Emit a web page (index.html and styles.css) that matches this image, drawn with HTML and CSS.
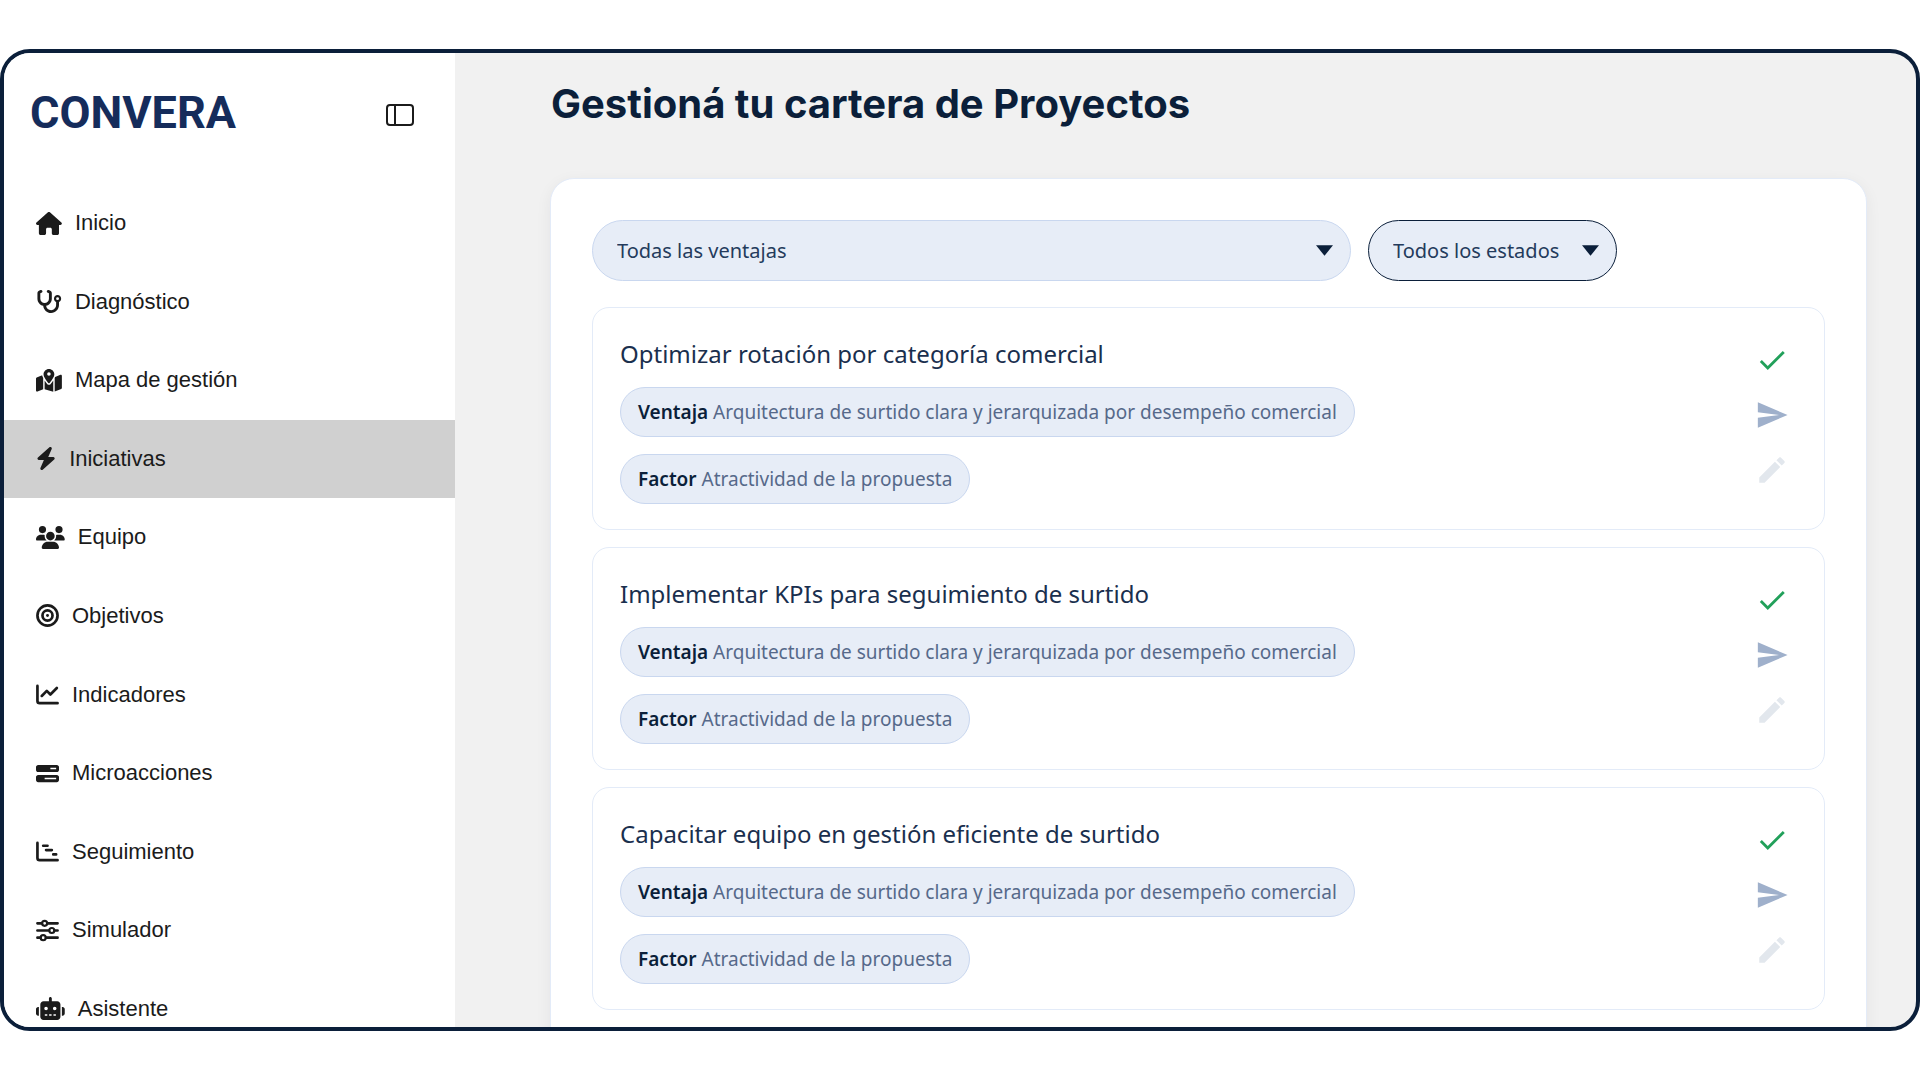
FILE: index.html
```html
<!DOCTYPE html>
<html lang="es">
  <head>
    <meta charset="UTF-8">
    <meta name="viewport" content="width=device-width, initial-scale=1.0">
    <title>Convera - Iniciativas</title>
    <link rel="stylesheet" href="styles.css">
  </head>

  <body>
    <div class="frame">
      <!-- Sidebar -->
      <aside class="sidebar">
        <div class="sidebar-header">
          <span class="logo">CONVERA</span>
          <button class="toggle" type="button" aria-label="Contraer menú">
            <svg viewBox="0 0 28 22"><rect x="1" y="1" width="26" height="20" rx="3"/><path d="M9 1v20"/></svg>
          </button>
        </div>

        <nav class="menu">
          <a href="#inicio">
            <svg viewBox="0 0 576 512"><path d="M575.8 255.500c0 18-15 32.100-32 32.100h-32l.7 160.200c0 2.700-.2 5.400-.5 8.100V472c0 22.100-17.900 40-40 40H392c-22.100 0-40-17.900-40-40V384c0-17.700-14.300-32-32-32H256c-17.700 0-32 14.300-32 32v88c0 22.100-17.900 40-40 40H104c-22.100 0-40-17.900-40-40V287.600H32c-18 0-32-14-32-32.100c0-9 3-17 10-24L266.400 8c7-7 15-8 22-8s15 2 21 7L564.800 231.500c8 7 12 15 11 24z"/></svg>
            Inicio
          </a>
          <a href="#diagnostico">
            <svg viewBox="0 0 576 512"><path d="M142.400 21.900c5.600 16.800-3.500 34.900-20.200 40.500L96 71.100V192c0 53 43 96 96 96s96-43 96-96V71.100l-26.100-8.700c-16.800-5.600-25.800-23.700-20.200-40.500s23.700-25.800 40.500-20.200l26.100 8.700C334.400 19.100 352 43.500 352 71.100V192c0 77.200-54.600 141.600-127.300 156.700C231 404.600 278.400 448 336 448c61.900 0 112-50.100 112-112V265.300c-28.300-12.300-48-40.500-48-73.300c0-44.200 35.800-80 80-80s80 35.800 80 80c0 32.800-19.700 61-48 73.300V336c0 97.200-78.800 176-176 176c-92.900 0-168.900-71.900-175.500-163.100C87.200 334.200 32 269.600 32 192V71.100c0-27.500 17.600-52 43.800-60.700l26.100-8.700c16.800-5.600 34.900 3.500 40.500 20.200zM480 224a32 32 0 1 0 0-64 32 32 0 1 0 0 64z"/></svg>
            Diagnóstico
          </a>
          <a href="#mapa">
            <svg viewBox="0 0 576 512"><path d="M408 120c0 54.600-73.100 151.900-105.200 192c-7.700 9.600-22 9.600-29.600 0C241.100 271.900 168 174.600 168 120C168 53.700 221.700 0 288 0s120 53.700 120 120zm8 80.400c3.500-6.900 6.700-13.800 9.600-20.600c.5-1.200 1-2.500 1.500-3.700l116-46.400C558.900 123.400 576 135 576 152V422.800c0 9.800-6 18.600-15.100 22.300L416 503V200.400zM137.600 138.300c2.400 14.100 7.200 28.300 12.800 41.500c2.900 6.800 6.100 13.700 9.600 20.600V451.800L32.900 502.700C17.100 509 0 497.400 0 480.400V209.600c0-9.800 6-18.600 15.100-22.300l122.600-49zM327.800 332c13.900-17.400 35.700-45.700 56.200-77V504.300L192 449.400V255c20.500 31.300 42.300 59.600 56.200 77c20.500 25.600 59.100 25.600 79.600 0zM288 152a40 40 0 1 0 0-80 40 40 0 1 0 0 80z"/></svg>
            Mapa de gestión
          </a>
          <a href="#iniciativas" class="active">
            <svg viewBox="0 0 448 512"><path d="M349.400 44.600c5.900-13.700 1.500-29.700-10.600-38.500s-28.600-8-39.900 1.800l-256 224c-10 8.800-13.600 22.900-8.900 35.300S50.700 288 64 288H175.500L98.600 467.400c-5.900 13.700-1.500 29.700 10.600 38.500s28.600 8 39.900-1.800l256-224c10-8.800 13.600-22.900 8.900-35.300s-16.600-20.700-30-20.700H272.500L349.400 44.600z"/></svg>
            Iniciativas
          </a>
          <a href="#equipo">
            <svg viewBox="0 0 640 512"><path d="M144 0a80 80 0 1 1 0 160A80 80 0 1 1 144 0zM512 0a80 80 0 1 1 0 160A80 80 0 1 1 512 0zM0 298.700C0 239.800 47.800 192 106.700 192h42.700c15.900 0 31 3.500 44.600 9.700c-1.300 7.200-1.900 14.700-1.900 22.300c0 38.200 16.800 72.500 43.300 96H21.300C9.600 320 0 310.400 0 298.700zM405.300 320c26.600-23.500 43.300-57.800 43.300-96c0-7.600-.7-15-1.900-22.300c13.600-6.300 28.700-9.700 44.600-9.700h42C592.200 192 640 239.800 640 298.700c0 11.800-9.600 21.300-21.300 21.300H405.300zM224 224a96 96 0 1 1 192 0 96 96 0 1 1 -192 0zM128 485.300C128 411.700 187.700 352 261.300 352H378.700C452.300 352 512 411.700 512 485.300c0 14.700-11.900 26.700-26.700 26.700H154.700c-14.700 0-26.700-11.900-26.700-26.700z"/></svg>
            Equipo
          </a>
          <a href="#objetivos">
            <svg viewBox="0 0 512 512"><circle class="line" cx="256" cy="256" r="224"/><circle class="line" cx="256" cy="256" r="112"/><circle cx="256" cy="256" r="32"/></svg>
            Objetivos
          </a>
          <a href="#indicadores">
            <svg viewBox="0 0 512 512"><path class="line" d="M32 64v336c0 26 22 48 48 48h400M128 288l112-112 80 80 144-144"/></svg>
            Indicadores
          </a>
          <a href="#microacciones">
            <svg viewBox="0 0 512 512"><path d="M448 160H320V128H448v32zM48 64C21.500 64 0 85.500 0 112v64c0 26.500 21.500 48 48 48H464c26.500 0 48-21.500 48-48V112c0-26.500-21.500-48-48-48H48zM448 352v32H192V352H448zM48 288c-26.500 0-48 21.500-48 48v64c0 26.500 21.500 48 48 48H464c26.500 0 48-21.500 48-48V336c0-26.500-21.500-48-48-48H48z"/></svg>
            Microacciones
          </a>
          <a href="#seguimiento">
            <svg viewBox="0 0 512 512"><path class="line" d="M32 64v336c0 26 22 48 48 48h400M160 128h96M224 224h128M384 320h64"/></svg>
            Seguimiento
          </a>
          <a href="#simulador">
            <svg viewBox="0 0 512 512"><path class="line" d="M32 96h100M256 96h224M32 256h256M412 256h68M32 416h68M224 416h256"/><circle class="ring" cx="192" cy="96" r="56"/><circle class="ring" cx="352" cy="256" r="56"/><circle class="ring" cx="160" cy="416" r="56"/></svg>
            Simulador
          </a>
          <a href="#asistente">
            <svg viewBox="0 0 640 512"><path d="M320 0c17.700 0 32 14.300 32 32V96H472c39.800 0 72 32.200 72 72V440c0 39.800-32.200 72-72 72H168c-39.800 0-72-32.200-72-72V168c0-39.800 32.200-72 72-72H288V32c0-17.700 14.300-32 32-32zM208 384c-8.800 0-16 7.200-16 16s7.200 16 16 16h32c8.800 0 16-7.200 16-16s-7.200-16-16-16H208zm96 0c-8.800 0-16 7.200-16 16s7.200 16 16 16h32c8.800 0 16-7.200 16-16s-7.200-16-16-16H304zm96 0c-8.800 0-16 7.200-16 16s7.200 16 16 16h32c8.800 0 16-7.200 16-16s-7.200-16-16-16H400zM264 256a40 40 0 1 0 -80 0 40 40 0 1 0 80 0zm152 40a40 40 0 1 0 0-80 40 40 0 1 0 0 80zM48 224H64V416H48c-26.500 0-48-21.500-48-48V272c0-26.500 21.500-48 48-48zm544 0c26.500 0 48 21.500 48 48v96c0 26.500-21.500 48-48 48H576V224h16z"/></svg>
            Asistente
          </a>
        </nav>
      </aside>

      <!-- Main content -->
      <main class="content">
        <h1>Gestioná tu cartera de Proyectos</h1>

        <section class="panel">
          <div class="filters">
            <div class="select-wrap wide">
              <select aria-label="Ventajas">
                <option>Todas las ventajas</option>
              </select>
              <svg class="caret" viewBox="0 0 16 10"><path d="M0 0h16L8 10z"/></svg>
            </div>
            <div class="select-wrap status">
              <select aria-label="Estados">
                <option>Todos los estados</option>
              </select>
              <svg class="caret" viewBox="0 0 16 10"><path d="M0 0h16L8 10z"/></svg>
            </div>
          </div>

          <article class="card">
            <div class="card-body">
              <h2>Optimizar rotación por categoría comercial</h2>
              <span class="chip"><b>Ventaja</b> Arquitectura de surtido clara y jerarquizada por desempeño comercial</span>
              <span class="chip"><b>Factor</b> Atractividad de la propuesta</span>
            </div>
            <div class="actions">
              <button class="done" type="button" aria-label="Completar"><svg viewBox="0 0 24 24"><path d="M9 16.170 4.830 12l-1.420 1.410L9 19 21 7l-1.410-1.410z"/></svg></button>
              <button class="send" type="button" aria-label="Enviar"><svg viewBox="0 0 24 24"><path d="M2.010 21 23 12 2.010 3 2 10l15 2-15 2z"/></svg></button>
              <button class="edit" type="button" aria-label="Editar"><svg viewBox="0 0 24 24"><path d="M3 17.250V21h3.750L17.810 9.940l-3.750-3.750zM20.710 7.040c.39-.39.39-1.020 0-1.410l-2.340-2.340c-.39-.39-1.020-.39-1.410 0l-1.830 1.830 3.750 3.750z"/></svg></button>
            </div>
          </article>

          <article class="card">
            <div class="card-body">
              <h2>Implementar KPIs para seguimiento de surtido</h2>
              <span class="chip"><b>Ventaja</b> Arquitectura de surtido clara y jerarquizada por desempeño comercial</span>
              <span class="chip"><b>Factor</b> Atractividad de la propuesta</span>
            </div>
            <div class="actions">
              <button class="done" type="button" aria-label="Completar"><svg viewBox="0 0 24 24"><path d="M9 16.170 4.830 12l-1.420 1.410L9 19 21 7l-1.410-1.410z"/></svg></button>
              <button class="send" type="button" aria-label="Enviar"><svg viewBox="0 0 24 24"><path d="M2.010 21 23 12 2.010 3 2 10l15 2-15 2z"/></svg></button>
              <button class="edit" type="button" aria-label="Editar"><svg viewBox="0 0 24 24"><path d="M3 17.250V21h3.750L17.810 9.940l-3.750-3.750zM20.710 7.040c.39-.39.39-1.020 0-1.410l-2.340-2.340c-.39-.39-1.020-.39-1.410 0l-1.830 1.830 3.750 3.750z"/></svg></button>
            </div>
          </article>

          <article class="card">
            <div class="card-body">
              <h2>Capacitar equipo en gestión eficiente de surtido</h2>
              <span class="chip"><b>Ventaja</b> Arquitectura de surtido clara y jerarquizada por desempeño comercial</span>
              <span class="chip"><b>Factor</b> Atractividad de la propuesta</span>
            </div>
            <div class="actions">
              <button class="done" type="button" aria-label="Completar"><svg viewBox="0 0 24 24"><path d="M9 16.170 4.830 12l-1.420 1.410L9 19 21 7l-1.410-1.410z"/></svg></button>
              <button class="send" type="button" aria-label="Enviar"><svg viewBox="0 0 24 24"><path d="M2.010 21 23 12 2.010 3 2 10l15 2-15 2z"/></svg></button>
              <button class="edit" type="button" aria-label="Editar"><svg viewBox="0 0 24 24"><path d="M3 17.250V21h3.750L17.810 9.940l-3.750-3.750zM20.710 7.040c.39-.39.39-1.020 0-1.410l-2.340-2.340c-.39-.39-1.020-.39-1.410 0l-1.830 1.830 3.750 3.750z"/></svg></button>
            </div>
          </article>
        </section>
      </main>
    </div>
  </body>
</html>
```

FILE: styles.css
```css
* {
  box-sizing: border-box;
}

body {
  margin: 0;
  padding: 49px 0;
  background-color: #fff;
  color: #0b1f3a;
  font-family: 'Noto Sans', sans-serif;
}

button {
  padding: 0;
  border: none;
  background: none;
  cursor: pointer;
}

svg {
  display: block;
}

.frame {
  display: flex;
  height: calc(100vh - 98px);
  border: 4px solid #0b1f3a;
  border-radius: 30px;
  background-color: #f1f1f1;
  overflow: hidden;
}

/* Sidebar */
.sidebar {
  flex: 0 0 451px;
  background-color: #fff;
}

.sidebar-header {
  display: flex;
  align-items: center;
  justify-content: space-between;
  height: 123px;
  margin-bottom: 8px;
  padding: 0 41px 0 26px;
}

.logo {
  padding-bottom: 5px;
  color: #152c5b;
  font-family: Roboto, sans-serif;
  font-size: 45px;
  font-weight: 700;
}

.toggle svg {
  width: 28px;
  height: 22px;
  fill: none;
  stroke: #1b1b1b;
  stroke-width: 2;
}

.menu {
  display: grid;
  grid-auto-rows: 1fr;
  height: 80vh;
}

.menu a {
  display: flex;
  align-items: center;
  gap: 13px;
  padding: 0 32px;
  color: #1b1b1b;
  font-family: 'Liberation Sans', sans-serif;
  font-size: 22px;
  text-decoration: none;
}

.menu a.active {
  background-color: #d0d0d0;
}

.menu svg {
  height: 23px;
  fill: #1b1b1b;
}

.menu .line,
.menu .ring {
  fill: none;
  stroke: #1b1b1b;
  stroke-width: 60;
  stroke-linecap: round;
  stroke-linejoin: round;
}

.menu .ring {
  stroke-width: 48;
}

/* Main content */
.content {
  flex: 1;
  padding: 27px 49px 0 95px;
}

h1 {
  margin: 0 0 50px;
  padding-left: 1px;
  font-family: Inter, sans-serif;
  font-size: 40px;
  font-weight: 700;
  line-height: 48px;
}

.panel {
  display: flex;
  flex-direction: column;
  gap: 17px;
  padding: 41px;
  border: 1px solid #e3ebf8;
  border-radius: 24px;
  background-color: #fff;
  box-shadow: 0 4px 16px rgba(11, 31, 58, 0.06);
}

.filters {
  display: flex;
  gap: 17px;
  margin-bottom: 9px;
}

.select-wrap {
  position: relative;
}

.wide {
  flex: 0 1 759px;
}

.status {
  flex: 0 0 249px;
}

.select-wrap select {
  width: 100%;
  height: 61px;
  padding: 0 24px;
  border: 1px solid #c9d7ef;
  border-radius: 31px;
  background-color: #e7edf7;
  color: #243b5c;
  font-family: 'Noto Sans', sans-serif;
  font-size: 20px;
  appearance: none;
}

.status select {
  border-color: #0b1f3a;
}

.caret {
  position: absolute;
  top: 25px;
  right: 18px;
  width: 17px;
  height: 11px;
  fill: #0b1f3a;
  pointer-events: none;
}

.card {
  display: flex;
  justify-content: space-between;
  padding: 26px 35px 25px 27px;
  border: 1px solid #e3ebf8;
  border-radius: 17px;
}

.card-body {
  display: flex;
  flex-direction: column;
  align-items: flex-start;
  gap: 17px;
}

h2 {
  margin: 0 0 -4px;
  color: #1a2f4e;
  font-size: 24px;
  font-weight: 400;
  line-height: 40px;
}

.chip {
  padding: 0 17px;
  border: 1px solid #c9d7ef;
  border-radius: 25px;
  background-color: #e7edf7;
  color: #56698a;
  font-size: 19px;
  line-height: 48px;
}

.chip b {
  color: #0b1f3a;
  font-weight: 600;
}

.actions {
  display: flex;
  flex-direction: column;
  gap: 21px;
  padding-top: 9px;
}

.actions svg {
  width: 34px;
  height: 34px;
}

.done {
  fill: #22a05a;
}

.send {
  fill: #9fb0cb;
}

.edit {
  fill: #e2e7ed;
}
```
